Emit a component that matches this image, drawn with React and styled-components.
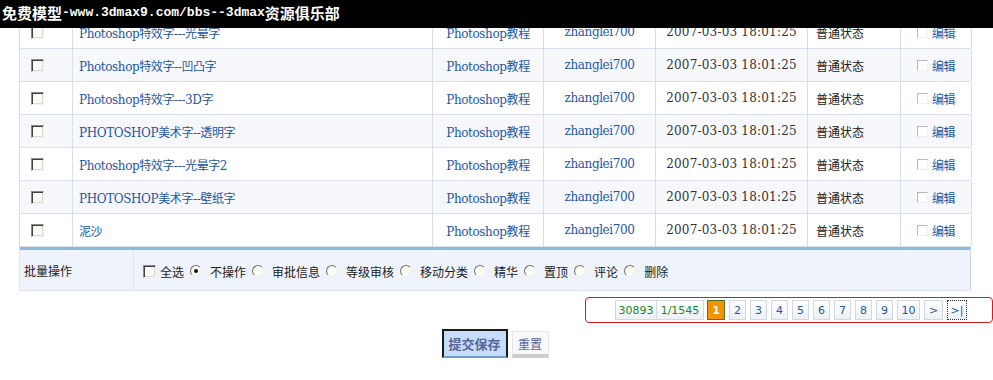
import React from 'react';
import styled, {createGlobalStyle} from 'styled-components';

const rows = [
    'Photoshop特效字---光晕字',
    'Photoshop特效字--凹凸字',
    'Photoshop特效字---3D字',
    'PHOTOSHOP美术字--透明字',
    'Photoshop特效字---光晕字2',
    'PHOTOSHOP美术字--壁纸字',
    '泥沙',
]

const options = ['不操作', '审批信息', '等级审核', '移动分类', '精华', '置顶', '评论', '删除']
const pages = ['2', '3', '4', '5', '6', '7', '8', '9', '10', '>']

const App = () => {
    return (
        <Page>
            <GlobalStyle/>
            <Banner>
                <Cjk>免费模型</Cjk><Latin>-www.3dmax9.com/bbs--3dmax</Latin><Cjk>资源俱乐部</Cjk>
            </Banner>
            <Table>
                {rows.map((title, i) => (
                    <Row key={i} $alt={i % 2 === 1}>
                        <Cell $pad="11px"><Check/></Cell>
                        <Cell $pad="6px"><Link>{title}</Link></Cell>
                        <Cell $center><Link>Photoshop教程</Link></Cell>
                        <Cell $center><Link>zhanglei700</Link></Cell>
                        <Cell $center><DateText>2007-03-03 18:01:25</DateText></Cell>
                        <Cell $pad="8px"><Status>普通状态</Status></Cell>
                        <Cell $center><SmallCheck/><Link>编辑</Link></Cell>
                    </Row>
                ))}
                <BatchRow>
                    <BatchLabel>批量操作</BatchLabel>
                    <BatchOptions>
                        <Check/><OptLabel>全选</OptLabel>
                        {options.map((o, i) => (
                            <React.Fragment key={o}>
                                <Radio $checked={i === 0}/><OptLabel>{o}</OptLabel>
                            </React.Fragment>
                        ))}
                    </BatchOptions>
                </BatchRow>
            </Table>
            <Pager>
                <PageItem $green $w="42px">30893</PageItem>
                <PageItem $green $w="48px" $joined>1/1545</PageItem>
                <Current>1</Current>
                {pages.map((p) => (
                    <PageItem key={p} $w={p === '10' ? '23px' : p === '>' ? '19px' : '17px'} $gap>{p}</PageItem>
                ))}
                <PageItem $w="20px" $gap $focus>&gt;|</PageItem>
            </Pager>
            <Actions>
                <SubmitButton>提交保存</SubmitButton>
                <ResetButton>重置</ResetButton>
            </Actions>
        </Page>
    );
};

const GlobalStyle = createGlobalStyle`
  body {
    margin: 0;
    background: #fff;
    overflow: hidden;
    font-family: "Noto Sans CJK SC", sans-serif;
  }
`

const Page = styled.div`
  padding-top: 16px;
  width: 993px;
`

const Banner = styled.div`
  position: fixed;
  top: 0;
  left: 0;
  right: 0;
  height: 28px;
  background: #000;
  color: #fff;
  display: flex;
  align-items: center;
  padding-left: 2px;
  padding-bottom: 3px;
  box-sizing: border-box;
  z-index: 5;
`

const Cjk = styled.span`
  font-family: "Noto Sans CJK SC", sans-serif;
  font-weight: 700;
  font-size: 15px;
`

const Latin = styled.span`
  font-family: "Liberation Mono", monospace;
  font-weight: 700;
  font-size: 13px;
`

const Table = styled.div`
  margin-left: 19px;
  width: 952px;
`

const Row = styled.div`
  display: grid;
  grid-template-columns: 53px 360px 111px 112px 152px 93px 71px;
  height: 33px;
  box-sizing: border-box;
  border-bottom: 1px solid #d8dfea;
  border-left: 1px solid #d8dfea;
  background: ${p => p.$alt ? '#f6f8fc' : '#fff'};
`

const Cell = styled.div`
  display: flex;
  align-items: center;
  justify-content: ${p => p.$center ? 'center' : 'flex-start'};
  padding-left: ${p => p.$pad || '0'};
  border-right: 1px solid #d8dfea;
  box-sizing: border-box;
  white-space: nowrap;
  overflow: hidden;
`

const Link = styled.span`
  font-family: "DejaVu Serif", "Noto Sans CJK SC", serif;
  font-size: 12px;
  letter-spacing: -0.4px;
  color: #1f57a2;
`

const DateText = styled.span`
  font-family: "DejaVu Serif", serif;
  font-size: 12px;
  letter-spacing: 0.2px;
  color: #333;
`

const Status = styled.span`
  font-size: 12px;
  color: #222;
`

const Check = styled.span`
  display: inline-block;
  width: 13px;
  height: 13px;
  box-sizing: border-box;
  border: 1px solid;
  border-color: #8a8a8a #f2f2f2 #f2f2f2 #8a8a8a;
  box-shadow: inset 1px 1px 0 #404040, inset -1px -1px 0 #dcdad2;
  background: #fbfbf6;
`

const SmallCheck = styled.span`
  display: inline-block;
  width: 11px;
  height: 11px;
  box-sizing: border-box;
  border: 1px solid;
  border-color: #b8b8b8 #f0f0f0 #f0f0f0 #b8b8b8;
  margin-right: 4px;
  background: #fff;
`

const BatchRow = styled.div`
  display: flex;
  height: 44px;
  box-sizing: border-box;
  border-top: 3px solid #8ebadc;
  border-bottom: 1px solid #dfe5ee;
  border-right: 1px solid #d2d8e0;
  border-left: 1px solid #dfe5ee;
  background: #eff4fc;
`

const BatchLabel = styled.div`
  width: 114px;
  padding-left: 4px;
  box-sizing: border-box;
  border-right: 1px solid #dde3ec;
  display: flex;
  align-items: center;
  font-size: 12px;
  color: #222;
`

const BatchOptions = styled.div`
  flex: 1;
  display: flex;
  align-items: center;
  padding-left: 9px;
  padding-top: 2px;
`

const OptLabel = styled.span`
  font-size: 12px;
  color: #222;
  margin-left: 4px;
  margin-right: 6px;
`

const Radio = styled.span`
  display: inline-block;
  position: relative;
  width: 12px;
  height: 12px;
  box-sizing: border-box;
  border-radius: 50%;
  border: 1px solid;
  border-color: #6e6e6e #eeeeee #eeeeee #6e6e6e;
  background: #fcfbf2;
  margin-right: 4px;

  &::after {
    content: '';
    display: ${p => p.$checked ? 'block' : 'none'};
    position: absolute;
    left: 3px;
    top: 3px;
    width: 4px;
    height: 4px;
    border-radius: 50%;
    background: #111;
  }
`

const Pager = styled.div`
  margin: 6px 0 0 585px;
  width: 408px;
  height: 26px;
  box-sizing: border-box;
  border: 1px solid #e01818;
  border-radius: 4px;
  display: flex;
  align-items: center;
  padding-left: 29px;
`

const PageItem = styled.span`
  width: ${p => p.$w};
  height: 20px;
  box-sizing: border-box;
  margin-left: ${p => p.$gap ? '4px' : p.$joined ? '-1px' : '0'};
  border: 1px ${p => p.$focus ? 'dotted #333' : 'solid #cfd9e4'};
  background: linear-gradient(#ffffff, #edf1f6);
  display: flex;
  align-items: center;
  justify-content: center;
  font-family: "DejaVu Sans", sans-serif;
  font-size: 11px;
  color: ${p => p.$green ? '#1c8a1c' : '#1f57a2'};
`

const Current = styled.span`
  width: 18px;
  height: 20px;
  margin-left: 3px;
  box-sizing: border-box;
  border: 1px solid #4d7626;
  background: #f39300;
  color: #fff;
  font-family: "DejaVu Sans", sans-serif;
  font-size: 11px;
  font-weight: 700;
  display: flex;
  align-items: center;
  justify-content: center;
`

const Actions = styled.div`
  display: flex;
  justify-content: center;
  align-items: flex-end;
  gap: 4px;
  margin-top: 6px;
  padding-right: 3px;
`

const SubmitButton = styled.button`
  width: 66px;
  height: 29px;
  box-sizing: border-box;
  border: 2px solid #1a1a1a;
  border-bottom-color: #6e9fd0;
  background: #c6ddfa;
  color: #56649a;
  font-family: "Noto Sans CJK SC", sans-serif;
  font-size: 13px;
  font-weight: 700;
  padding: 0;
`

const ResetButton = styled.button`
  width: 37px;
  height: 27px;
  box-sizing: border-box;
  border: 1px solid #e2e6ec;
  border-bottom: 4px solid #cdcdcd;
  background: #f7f9fc;
  color: #56649a;
  font-family: "Noto Sans CJK SC", sans-serif;
  font-size: 12px;
  padding: 0;
`

export default App;
